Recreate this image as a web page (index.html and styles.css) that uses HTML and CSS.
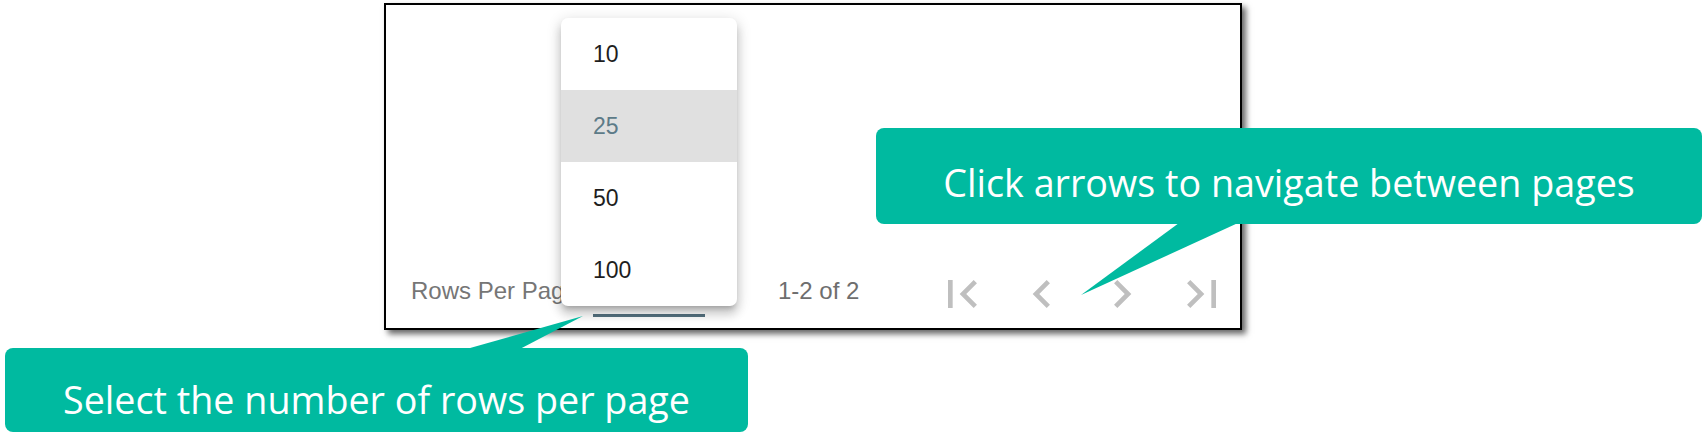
FILE: index.html
```html
<!DOCTYPE html>
<html lang="en">
<head>
<meta charset="utf-8">
<title>Table pagination help</title>
<link rel="stylesheet" href="styles.css">
</head>
<body>
<div class="canvas">
  <div class="frame">
    <div class="footer">
      <span class="label">Rows Per Page:</span>
      <div class="select"><span class="select-value">25</span></div>
      <span class="range">1-2 of 2</span>
      <div class="nav">
        <button class="nav-btn" aria-label="First page">
          <svg viewBox="0 0 24 24"><path d="M18.41 16.59L13.82 12l4.59-4.59L17 6l-6 6 6 6zM6 6h2v12H6z"/></svg>
        </button>
        <button class="nav-btn" aria-label="Previous page">
          <svg viewBox="0 0 24 24"><path d="M15.41 7.41L14 6l-6 6 6 6 1.41-1.41L10.830 12z"/></svg>
        </button>
        <button class="nav-btn" aria-label="Next page">
          <svg viewBox="0 0 24 24"><path d="M10 6L8.59 7.41 13.17 12l-4.58 4.59L10 18l6-6z"/></svg>
        </button>
        <button class="nav-btn" aria-label="Last page">
          <svg viewBox="0 0 24 24"><path d="M5.59 7.41L10.18 12l-4.59 4.59L7 18l6-6-6-6zM16 6h2v12h-2z"/></svg>
        </button>
      </div>
    </div>
    <ul class="menu">
      <li class="menu-item">10</li>
      <li class="menu-item selected">25</li>
      <li class="menu-item">50</li>
      <li class="menu-item">100</li>
    </ul>
  </div>

  <div class="callout callout-rows">
    <svg class="pointer pointer-rows" viewBox="0 0 140 36" width="140" height="36"><polygon points="8,35 128,1 63,35"/></svg>
    <span class="callout-text">Select the number of rows per page</span>
  </div>

  <div class="callout callout-arrows">
    <svg class="pointer pointer-arrows" viewBox="0 0 170 76" width="170" height="76"><polygon points="103,0 162,0 5,72"/></svg>
    <span class="callout-text">Click arrows to navigate between pages</span>
  </div>
</div>
</body>
</html>
```

FILE: styles.css
```css
* {
  box-sizing: border-box;
}

html, body {
  margin: 0;
  padding: 0;
  background: #ffffff;
}

.canvas {
  position: relative;
  width: 1704px;
  height: 436px;
  overflow: hidden;
  padding: 3px 0 0 384px;
  font-family: "Liberation Sans", Arial, sans-serif;
}

.frame {
  position: relative;
  width: 858px;
  height: 327px;
  border: 2px solid #000000;
  background: #ffffff;
  box-shadow: 4px 4px 6px rgba(0, 0, 0, 0.6);
  display: flex;
  flex-direction: column;
  justify-content: flex-end;
  padding-bottom: 6px;
}

.footer {
  height: 56px;
  display: flex;
  align-items: center;
  padding: 0 10px 0 25px;
  font-size: 24px;
}

.label {
  color: #767676;
  width: 182px;
  white-space: nowrap;
  margin-bottom: 6px;
}

.select {
  width: 112px;
  height: 46px;
  border-bottom: 3px solid #567280;
  display: flex;
  align-items: center;
  color: #212121;
}

.range {
  color: #6e6e6e;
  margin-left: 73px;
  white-space: nowrap;
  margin-bottom: 6px;
}

.nav {
  margin-left: auto;
  display: flex;
  gap: 24px;
}

.nav-btn {
  width: 56px;
  height: 56px;
  padding: 0;
  border: 0;
  background: transparent;
  display: block;
}

.nav-btn svg {
  display: block;
  width: 56px;
  height: 56px;
  fill: #bfbfbf;
}

.menu {
  position: absolute;
  left: 175px;
  top: 13px;
  width: 176px;
  margin: 0;
  padding: 0;
  list-style: none;
  background: #ffffff;
  border-radius: 7px;
  overflow: hidden;
  box-shadow: 0 5px 5px -3px rgba(0, 0, 0, 0.2), 0 8px 10px 1px rgba(0, 0, 0, 0.14), 0 3px 14px 2px rgba(0, 0, 0, 0.12);
}

.menu-item {
  height: 72px;
  display: flex;
  align-items: center;
  padding-left: 32px;
  font-size: 23px;
  color: #1e1e1e;
}

.menu-item.selected {
  background: #e0e0e0;
  color: #5d7b88;
}

.callout {
  position: absolute;
  background: #00baa0;
  border-radius: 8px;
  color: #ffffff;
  font-family: "Open Sans", "Noto Sans", sans-serif;
  font-size: 37.7px;
  line-height: 45px;
  text-align: center;
  white-space: nowrap;
}

.callout-rows {
  left: 5px;
  top: 348px;
  width: 743px;
  height: 84px;
  padding-top: 29px;
}

.callout-arrows {
  left: 876px;
  top: 128px;
  width: 826px;
  height: 96px;
  padding-top: 32px;
}

.pointer {
  position: absolute;
  fill: #00baa0;
  display: block;
}

.pointer-rows {
  left: 450px;
  top: -33px;
}

.pointer-arrows {
  left: 200px;
  top: 95px;
}

.callout-text {
  position: relative;
}
```
